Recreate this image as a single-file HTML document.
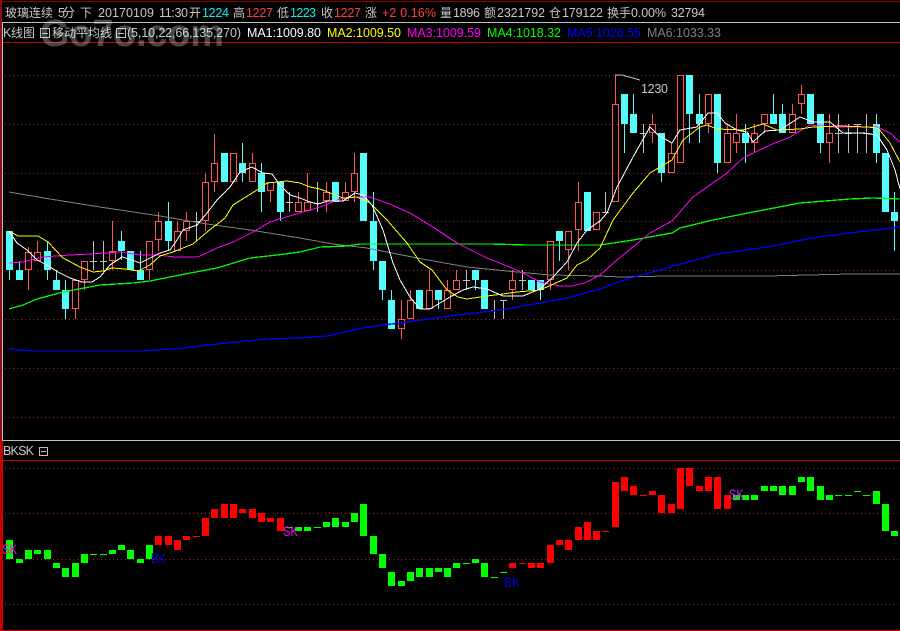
<!DOCTYPE html>
<html>
<head>
<meta charset="utf-8">
<title>玻璃连续 5分</title>
<style>
html,body{margin:0;padding:0;background:#000;width:900px;height:631px;overflow:hidden}
svg{display:block}
text{font-family:"Liberation Sans","Noto Sans CJK SC",sans-serif;font-size:12.5px}
.c{font-size:12px}
.g{fill:#c8c8c8}.r{fill:#ff4040}.b{fill:#00f4f4}
.s{font-size:14px}
</style>
</head>
<body>
<svg width="900" height="631" viewBox="0 0 900 631" xmlns="http://www.w3.org/2000/svg">
<rect width="900" height="631" fill="#000"/>
<g shape-rendering="crispEdges">
<!-- frame -->
<rect x="0" y="1" width="900" height="1" fill="#8c0000"/>
<rect x="0" y="0" width="2" height="440" fill="#8c1010"/>
<rect x="0" y="440" width="3" height="191" fill="#c80000"/>
<rect x="2" y="22" width="1" height="418" fill="#c0c0c0"/>
<rect x="2" y="22" width="898" height="1" fill="#c0c0c0"/>
<rect x="2" y="440" width="898" height="1" fill="#c0c0c0"/>
<rect x="3" y="42" width="897" height="1" fill="#c80000"/>
<rect x="3" y="460" width="897" height="1" fill="#c80000"/>
<rect x="0" y="630" width="900" height="1" fill="#c80000"/>
<!-- dotted grid -->
<path d="M5 75.5H900M5 124.5H900M5 173.5H900M5 221.5H900M5 270.5H900M5 319.5H900M5 368.5H900M5 417.5H900M5 468.5H900M5 513.5H900M5 559.5H900M5 604.5H900" stroke="#a52020" stroke-width="1" stroke-dasharray="1 3" fill="none"/>
<!-- cyan wicks -->
<path stroke="#54fcfc" fill="none" d="M9.5 270V280M19.5 261V270M47.5 241V280M56.5 270V280M65.5 280V319M121.5 231V260M140.5 251V270M168.5 202V251M242.5 143V182M261.5 163V212M280.5 182V221M373.5 192V270M382.5 261V300M391.5 290V300M438.5 290V309M475.5 270V290M540.5 280V300M559.5 241V261M624.5 124V153M633.5 94V114M661.5 173V182M689.5 114V143M699.5 94V143M717.5 163V173M745.5 124V163M773.5 94V114M782.5 104V114M820.5 143V153M876.5 114V163M894.5 192V251"/>
<!-- cyan bodies -->
<path fill="#54fcfc" d="M6 231h7v39h-7zM16 270h7v10h-7zM44 251h7v19h-7zM53 280h7v10h-7zM62 290h7v19h-7zM118 241h7v10h-7zM127 251h7v19h-7zM137 270h7v10h-7zM165 221h7v20h-7zM221 153h7v29h-7zM239 163h7v10h-7zM258 173h7v19h-7zM277 182h7v30h-7zM332 182h7v20h-7zM360 153h7v68h-7zM370 221h7v40h-7zM379 261h7v29h-7zM388 300h7v29h-7zM416 290h7v19h-7zM435 290h7v10h-7zM472 270h7v10h-7zM481 280h7v29h-7zM528 280h7v10h-7zM537 280h7v10h-7zM556 231h7v10h-7zM584 192h7v39h-7zM621 94h7v30h-7zM630 114h7v19h-7zM658 133h7v40h-7zM686 75h7v39h-7zM696 114h7v10h-7zM714 94h7v69h-7zM742 133h7v10h-7zM770 114h7v10h-7zM779 114h7v19h-7zM807 94h7v30h-7zM817 114h7v29h-7zM873 124h7v29h-7zM882 153h7v59h-7zM891 212h7v9h-7z"/>
<!-- red candles -->
<path stroke="#ff5454" fill="none" d="M25.5 252.5h6v17h-6zM28.5 247V252M28.5 270V290M34.5 252.5h6v8h-6zM37.5 241V252M72.5 280.5h6v28h-6zM75.5 309V319M81.5 261.5h6v18h-6zM84.5 280V290M109.5 251.5h6v9h-6zM112.5 221V251M112.5 261V270M146.5 241.5h6v28h-6zM149.5 270V280M155.5 221.5h6v18h-6zM158.5 212V221M158.5 240V251M174.5 231.5h6v19h-6zM177.5 221V231M183.5 221.5h6v9h-6zM186.5 212V221M186.5 231V241M202.5 182.5h6v38h-6zM205.5 173V182M205.5 221V231M211.5 163.5h6v18h-6zM214.5 134V163M214.5 182V192M230.5 153.5h6v28h-6zM249.5 163.5h6v18h-6zM252.5 153V163M267.5 182.5h6v8h-6zM270.5 191V202M295.5 202.5h6v9h-6zM298.5 192V202M304.5 202.5h6v8h-6zM307.5 173V202M323.5 192.5h6v8h-6zM326.5 182V192M326.5 201V212M342.5 192.5h6v8h-6zM345.5 182V192M351.5 173.5h6v18h-6zM354.5 153V173M354.5 192V202M398.5 319.5h6v9h-6zM401.5 300V319M401.5 329V339M407.5 300.5h6v18h-6zM410.5 290V300M426.5 290.5h6v18h-6zM429.5 270V290M444.5 290.5h6v18h-6zM447.5 280V290M453.5 280.5h6v9h-6zM456.5 270V280M509.5 280.5h6v9h-6zM512.5 270V280M512.5 290V300M547.5 241.5h6v38h-6zM550.5 280V290M565.5 231.5h6v18h-6zM568.5 250V270M575.5 202.5h6v27h-6zM578.5 182V202M578.5 230V251M593.5 212.5h6v17h-6zM612.5 104.5h6v97h-6zM615.5 75V104M649.5 124.5h6v8h-6zM652.5 114V124M652.5 133V143M668.5 153.5h6v19h-6zM671.5 143V153M677.5 75.5h6v87h-6zM705.5 94.5h6v29h-6zM708.5 124V133M724.5 133.5h6v29h-6zM727.5 124V133M733.5 133.5h6v9h-6zM736.5 114V133M736.5 143V153M751.5 133.5h6v9h-6zM754.5 124V133M754.5 143V153M761.5 114.5h6v9h-6zM764.5 124V133M789.5 114.5h6v18h-6zM792.5 104V114M798.5 94.5h6v9h-6zM801.5 85V94M801.5 104V114M826.5 133.5h6v9h-6zM829.5 114V133M829.5 143V163"/>
<!-- doji -->
<path stroke="#c0c0c0" fill="none" d="M93.5 241V270M90 261.5h7M103.5 241V270M100 261.5h7M196.5 212V241M193 221.5h7M289.5 192V212M286 202.5h7M317.5 182V212M314 203.5h7M466.5 270V290M463 280.5h7M494.5 300V319M491 310.5h7M503.5 300V319M500 300.5h7M522.5 270V290M519 280.5h7M605.5 192V212M602 212.5h7M643.5 124V153M640 133.5h7M838.5 114V153M835 133.5h7M848.5 124V153M845 133.5h7M857.5 124V153M854 124.5h7M866.5 114V153M863 133.5h7"/>
<!-- moving averages -->
<g fill="none" stroke-width="1" stroke-linejoin="round">
<polyline stroke="#808080" points="9,192 50,199 100,207 160,216 207,224 250,230 300,238 333,244 367,248 417,258 467,267 517,272 550,275 600,276 620,277 667,276 767,276 850,274 900,274"/>
<polyline stroke="#0000ff" stroke-width="1.3" points="9,349 33,351 60,351 143,351 183,348 227,343 267,339 300,338 327,336 367,327 400,323 450,316 500,310 540,303 567,298 600,289 627,279 667,268 717,254 767,247 817,237 867,231 900,227"/>
<polyline stroke="#00ff00" stroke-width="1.3" points="9,309 23,305 37,299 63,292 100,285 133,283 150,281 180,275 217,268 250,258 277,255 300,252 320,247 347,246 360,244 460,244 490,244 527,245 600,245 633,240 672,233 680,228 713,220 753,212 800,203 850,199 873,198 900,199"/>
<polyline stroke="#ff00ff" points="9,263 23,262 43,257 70,255 90,254 120,252 140,255 157,255 175,257 192,257 198,257 217,248 233,242 253,232 270,222 283,218 300,213 320,207 340,199 353,197 370,197 387,203 410,213 433,227 457,243 487,258 517,270 540,282 560,286 573,286 587,282 600,275 617,260 650,233 672,221 693,197 727,173 743,158 770,145 790,137 810,125 833,127 877,127 890,133 900,142"/>
<polyline stroke="#ffff00" points="9,231 18,236 38,236 48,242 63,258 80,267 93,272 103,271 112,268 125,269 138,271 150,265 160,256 173,252 193,244 207,232 225,218 233,205 257,190 267,183 287,181 300,183 310,187 320,189 333,194 343,198 357,197 370,203 387,220 407,243 420,262 432,270 447,290 458,297 467,299 487,296 503,294 517,292 540,290 567,278 577,265 587,260 600,248 613,220 633,193 650,173 672,160 683,140 700,127 707,125 717,129 743,130 763,124 777,130 800,129 813,127 840,126 867,127 878,128 890,143 900,162"/>
<polyline stroke="#ffffff" points="9,231 17,243 27,250 37,260 47,265 58,272 70,278 82,282 92,282 100,277 110,265 122,257 132,260 140,263 150,258 160,253 170,250 177,240 183,230 197,225 207,213 217,200 230,187 240,172 252,167 263,173 272,174 280,185 290,195 300,198 310,202 318,204 328,201 343,201 355,193 363,195 372,205 383,230 393,263 400,280 410,297 420,309 430,309 440,303 450,297 463,290 473,287 487,289 503,296 523,296 540,289 553,277 567,262 577,243 587,230 600,221 607,213 617,187 633,157 650,127 658,135 672,143 680,130 697,127 708,113 717,113 725,123 737,130 747,132 753,142 765,131 780,130 800,117 813,122 830,122 843,133 863,133 877,135 887,150 895,170 900,189"/>
</g>
<!-- 1230 leader -->
<polyline fill="none" stroke="#c0c0c0" points="615,75 622,75 640,80"/>
<!-- lower panel green -->
<path fill="#00ff00" d="M6 540h7v19h-7zM16 559h7v4h-7zM25 550h7v9h-7zM34 550h7v4h-7zM44 550h7v9h-7zM53 563h7v5h-7zM62 568h7v9h-7zM72 563h7v14h-7zM81 554h7v9h-7zM90 554h7v1h-7zM100 554h7v1h-7zM109 550h7v4h-7zM118 545h7v5h-7zM127 550h7v9h-7zM137 559h7v4h-7zM146 545h7v14h-7zM286 527h7v1h-7zM295 527h7v4h-7zM304 527h7v4h-7zM314 527h7v1h-7zM323 522h7v5h-7zM332 518h7v9h-7zM342 522h7v5h-7zM351 513h7v9h-7zM360 504h7v32h-7zM370 536h7v18h-7zM379 554h7v14h-7zM388 572h7v14h-7zM398 581h7v5h-7zM407 572h7v9h-7zM416 568h7v9h-7zM426 568h7v9h-7zM435 568h7v4h-7zM444 568h7v9h-7zM453 563h7v5h-7zM463 563h7v1h-7zM472 559h7v4h-7zM481 563h7v14h-7zM491 577h7v1h-7zM500 572h7v1h-7zM733 495h7v5h-7zM742 495h7v5h-7zM751 495h7v5h-7zM761 486h7v5h-7zM770 486h7v5h-7zM779 486h7v9h-7zM789 486h7v9h-7zM798 477h7v5h-7zM807 477h7v14h-7zM817 486h7v14h-7zM826 495h7v5h-7zM835 495h7v1h-7zM845 495h7v1h-7zM854 491h7v1h-7zM863 495h7v1h-7zM873 491h7v13h-7zM882 504h7v27h-7zM891 531h7v5h-7z"/>
<!-- lower panel red -->
<path fill="#ff0000" d="M155 536h7v9h-7zM165 536h7v9h-7zM174 540h7v10h-7zM183 536h7v4h-7zM193 536h7v1h-7zM202 518h7v18h-7zM211 509h7v9h-7zM221 504h7v14h-7zM230 504h7v14h-7zM239 509h7v4h-7zM249 509h7v9h-7zM258 513h7v9h-7zM267 518h7v4h-7zM277 518h7v13h-7zM509 563h7v5h-7zM519 563h7v1h-7zM528 563h7v5h-7zM537 563h7v5h-7zM547 545h7v18h-7zM556 540h7v5h-7zM565 540h7v10h-7zM575 527h7v13h-7zM584 522h7v18h-7zM593 531h7v9h-7zM602 531h7v1h-7zM612 482h7v45h-7zM621 477h7v14h-7zM630 486h7v9h-7zM640 495h7v1h-7zM649 491h7v4h-7zM658 495h7v18h-7zM668 504h7v9h-7zM677 468h7v41h-7zM686 468h7v18h-7zM696 486h7v5h-7zM705 477h7v14h-7zM714 477h7v32h-7zM724 495h7v14h-7z"/>
<!-- collapse icons -->
<g fill="none" stroke="#c0c0c0">
<rect x="40.5" y="28.5" width="9" height="9"/><path d="M42 33.5h6"/>
<rect x="116.5" y="28.5" width="9" height="9"/><path d="M118 33.5h6"/>
<rect x="39.5" y="447.5" width="8" height="8"/><path d="M41 451.5h5"/>
</g>
</g>
<!-- header line 1 -->
<text class="c g" x="5" y="17" textLength="48">玻璃连续</text>
<text class="g" x="58" y="17" textLength="17">5分</text>
<text class="c g" x="80" y="17">下</text>
<text class="g" x="98" y="17" textLength="56">20170109</text>
<text class="g" x="159" y="17" textLength="29">11:30</text>
<text class="c g" x="189" y="17">开</text>
<text class="b" x="202" y="17" textLength="27">1224</text>
<text class="c g" x="233" y="17">高</text>
<text class="r" x="246" y="17" textLength="27">1227</text>
<text class="c g" x="277" y="17">低</text>
<text class="b" x="290" y="17" textLength="26">1223</text>
<text class="c g" x="321" y="17">收</text>
<text class="r" x="334" y="17" textLength="27">1227</text>
<text class="c g" x="365" y="17">涨</text>
<text class="r" x="382" y="17" textLength="54">+2 0.16%</text>
<text class="c g" x="440" y="17">量</text>
<text class="g" x="453" y="17" textLength="27">1896</text>
<text class="c g" x="484" y="17">额</text>
<text class="g" x="497" y="17" textLength="48">2321792</text>
<text class="c g" x="549" y="17">仓</text>
<text class="g" x="562" y="17" textLength="41">179122</text>
<text class="c g" x="607" y="17">换手</text>
<text class="g" x="631" y="17" textLength="35">0.00%</text>
<text class="g" x="671" y="17" textLength="34">32794</text>
<!-- header line 2 -->
<text class="g" x="3" y="37" textLength="8">K</text>
<text class="c g" x="11" y="37">线图</text>
<text class="c g" x="52" y="37">移动平均线</text>
<text class="g" x="127" y="37" textLength="114">(5,10,22,66,135,270)</text>
<text fill="#ffffff" x="247" y="37" textLength="74">MA1:1009.80</text>
<text fill="#ffff00" x="327" y="37" textLength="74">MA2:1009.50</text>
<text fill="#ff00ff" x="407" y="37" textLength="74">MA3:1009.59</text>
<text fill="#00ff00" x="487" y="37" textLength="74">MA4:1018.32</text>
<text fill="#0000ff" x="567" y="37" textLength="74">MA5:1026.55</text>
<text fill="#808080" x="647" y="37" textLength="74">MA6:1033.33</text>
<text class="g" x="641" y="93" textLength="27">1230</text>
<text class="g" x="3" y="455" textLength="31">BKSK</text>
<!-- signals -->
<text class="s" fill="#ff00ff" x="2" y="554" textLength="15" lengthAdjust="spacingAndGlyphs">SK</text>
<text class="s" fill="#ff00ff" x="283" y="536" textLength="15" lengthAdjust="spacingAndGlyphs">SK</text>
<text class="s" fill="#c020ff" x="729" y="499" textLength="15" lengthAdjust="spacingAndGlyphs">SK</text>
<text class="s" fill="#0000e0" x="151" y="563" textLength="15" lengthAdjust="spacingAndGlyphs">BK</text>
<text class="s" fill="#0000e0" x="504" y="587" textLength="16" lengthAdjust="spacingAndGlyphs">BK</text>
<!-- watermark -->
<text x="40" y="46" style="font-size:38px;font-weight:bold" fill="#ffffff" fill-opacity="0.28" textLength="184">Go7o.com</text>
</svg>
</body>
</html>
